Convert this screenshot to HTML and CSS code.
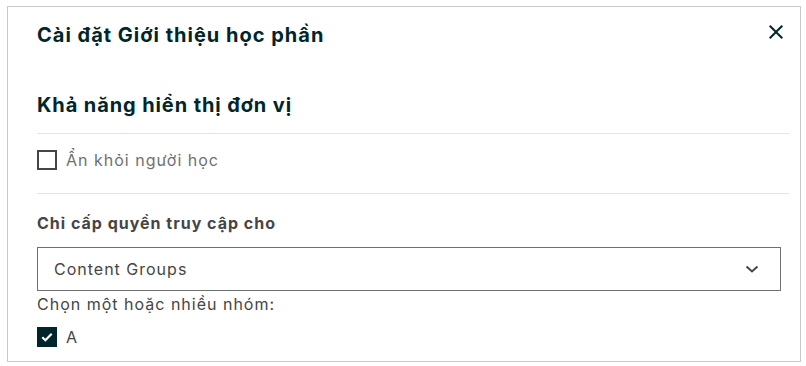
FILE: index.html
```html
<!DOCTYPE html>
<html lang="vi">
<head>
<meta charset="utf-8">
<title>Cài đặt Giới thiệu học phần</title>
<link rel="stylesheet" href="styles.css">
</head>
<body>
<div class="modal">
  <div class="modal-header">
    <h2 class="modal-title">Cài đặt Giới thiệu học phần</h2>
    <button class="close-btn" aria-label="Đóng">
      <svg width="24" height="24" viewBox="0 0 24 24"><path d="M19 6.41 17.59 5 12 10.59 6.41 5 5 6.41 10.59 12 5 17.59 6.41 19 12 13.41 17.59 19 19 17.59 13.41 12z" fill="currentColor"/></svg>
    </button>
  </div>
  <div class="modal-body">
    <h3 class="section-title">Khả năng hiển thị đơn vị</h3>
    <hr class="divider">
    <label class="check-row muted">
      <span class="box"></span>
      <span>Ẩn khỏi người học</span>
    </label>
    <hr class="divider divider-2">
    <div class="field-label">Chỉ cấp quyền truy cập cho</div>
    <div class="select">
      <span>Content Groups</span>
      <svg class="chev" width="14" height="8" viewBox="0 0 14 8"><path d="M1.5 1.5 7 6.5 12.5 1.5" fill="none" stroke="currentColor" stroke-width="2"/></svg>
    </div>
    <div class="group-hint">Chọn một hoặc nhiều nhóm:</div>
    <label class="check-row group-row">
      <span class="box checked">
        <svg width="12" height="10" viewBox="0 0 12 10"><path d="M1.3 5.2 4.4 8.2 10.7 1.8" fill="none" stroke="#fff" stroke-width="2.2"/></svg>
      </span>
      <span>A</span>
    </label>
  </div>
</div>
</body>
</html>
```
FILE: styles.css
```css
* { box-sizing: border-box; }
html, body { margin: 0; padding: 0; background: #fff; }
body {
  font-family: Inter, "Noto Sans", sans-serif;
  color: #454545;
  font-size: 16px;
  line-height: 24px;
  letter-spacing: 1px;
}
.modal {
  margin: 6px 0 0 7px;
  width: 794px;
  height: 356px;
  border: 1px solid #c9c9c9;
  padding: 0 11px 0 29px;
  overflow: hidden;
}
.modal-header {
  display: flex;
  justify-content: space-between;
  align-items: flex-start;
  padding-top: 14px;
}
.modal-title {
  margin: 0;
  font-size: 20px;
  line-height: 28px;
  font-weight: 700;
  color: #00262b;
  letter-spacing: 1px;
}
.close-btn {
  border: 0;
  background: none;
  padding: 0;
  margin: -1px 1px 0 0;
  width: 24px;
  height: 24px;
  color: #00262b;
  display: flex;
}
.modal-body { display: flex; flex-direction: column; }
.section-title {
  margin: 42px 0 0;
  font-size: 20px;
  line-height: 28px;
  font-weight: 700;
  color: #00262b;
  letter-spacing: 0.9px;
}
.divider {
  margin: 14px 0 0;
  border: 0;
  height: 1px;
  background: #e3e3e3;
}
.divider-2 { margin-top: 21px; }
.check-row {
  display: flex;
  align-items: center;
  gap: 9px;
  margin-top: 14px;
}
.check-row.muted { color: #707070; }
.box {
  width: 20px;
  height: 20px;
  border: 2px solid #454545;
  display: flex;
  align-items: center;
  justify-content: center;
  flex: none;
}
.box.checked { background: #00262b; border-color: #00262b; }
.field-label {
  margin-top: 17px;
  font-weight: 700;
}
.select {
  margin-top: 12px;
  width: 744px;
  height: 44px;
  border: 1px solid #707070;
  display: flex;
  align-items: center;
  justify-content: space-between;
  padding: 0 21px 0 16px;
}
.chev { color: #454545; }
.group-hint { margin-top: 1px; }
.group-row { margin-top: 9px; }
```
